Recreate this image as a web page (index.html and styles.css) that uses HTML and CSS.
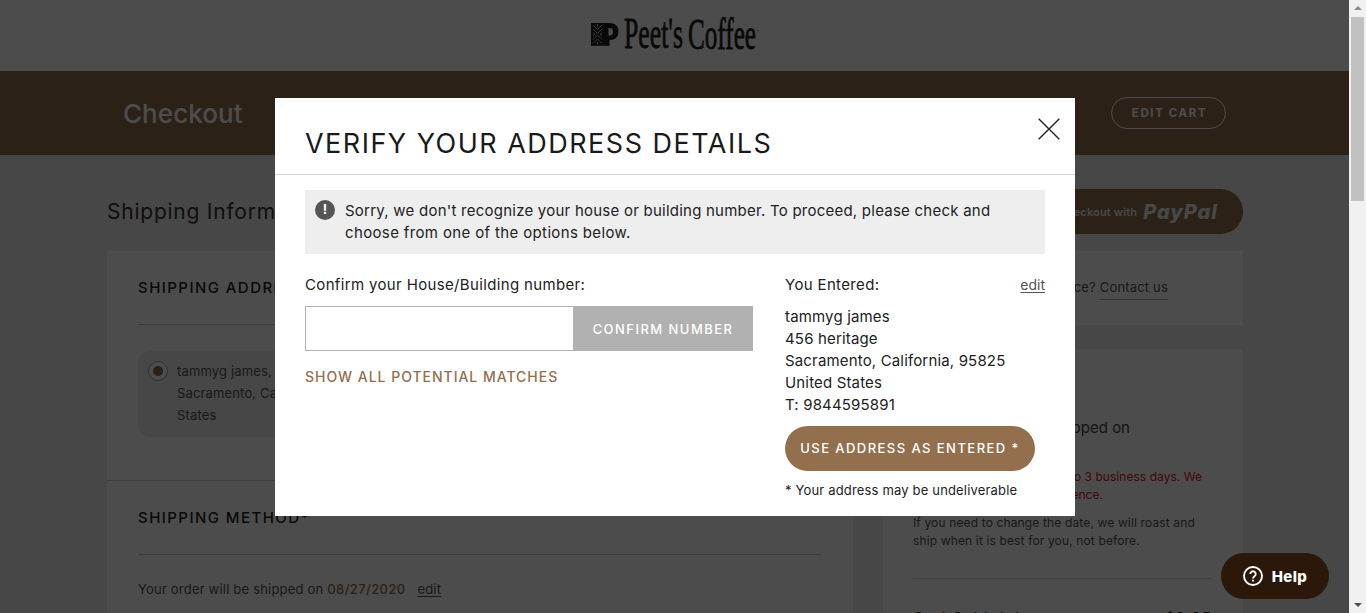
FILE: index.html
```html
<!DOCTYPE html>
<html lang="en">
<head>
<meta charset="utf-8">
<title>Checkout | Peet's Coffee</title>
<link rel="stylesheet" href="styles.css">
</head>
<body>
<div class="window">
  <div class="page">
    <header class="site-header">
      <svg class="logo" width="174" height="50" viewBox="0 0 174 50" role="img" aria-label="Peet's Coffee">
        <path fill-rule="evenodd" d="M3 13h18.500c6 0 9 3.500 9 8.500s-3 8.500-9 8.500v5.700H3zM20.500 18v7.500h1.500c2 0 3-1.500 3-3.700s-1-3.800-3-3.800z"/>
        <g class="logo-weave">
          <path d="M5 15l4.500 4.500L14 15M5 19l4.500 4.500L14 19M9.500 16.500V14"/>
          <path d="M5 29.500L9.500 25l4.500 4.500M5 33.500L9.500 29l4.500 4.500M9.500 34.500V32M5 23l2 1.300-2 1.300M14 23l-2 1.300 2 1.300"/>
        </g>
        <text class="logo-word" x="36" y="38" font-size="45" textLength="59" lengthAdjust="spacingAndGlyphs">Peet's</text>
        <text class="logo-word" x="100" y="39" font-size="44" textLength="68" lengthAdjust="spacingAndGlyphs">Coffee</text>
        <text x="168" y="21" font-size="2">TM</text>
      </svg>
    </header>
    <div class="banner">
      <h1 class="banner-title">Checkout</h1>
      <button class="edit-cart">EDIT CART</button>
    </div>
    <main class="content">
      <section class="col-main">
        <h2 class="col-title">Shipping Information</h2>
        <div class="card">
          <div class="card-section card-address">
            <h3 class="section-title">SHIPPING ADDRESS</h3>
            <div class="address-option">
              <span class="radio"></span>
              <p class="option-text">tammyg james, 456 heritage,<br>Sacramento, California, 95825, United<br>States</p>
            </div>
          </div>
          <div class="card-section card-method">
            <h3 class="section-title">SHIPPING METHOD*</h3>
            <p class="ship-date">Your order will be shipped on <b>08/27/2020</b> <a class="text-link">edit</a></p>
          </div>
        </div>
      </section>
      <aside class="col-side">
        <button class="paypal"><span>Checkout with</span><i>PayPal</i></button>
        <div class="card assist"><span>Need Assistance?</span><a class="contact">Contact us</a></div>
        <div class="card summary">
          <p class="ship-note">Your order will be shipped on</p>
          <div class="delay"><p>Orders may take up to 3 business days. We</p><p class="delay-end">appreciate your patience.</p></div>
          <p class="hint">If you need to change the date, we will roast and<br>ship when it is best for you, not before.</p>
          <div class="subtotal"><span>Cart Subtotal</span><span>$9.95</span></div>
        </div>
      </aside>
    </main>
    <div class="overlay">
      <div class="modal">
        <div class="modal-head">
          <h2 class="modal-title">VERIFY YOUR ADDRESS DETAILS</h2>
          <svg class="close" width="22" height="22" viewBox="0 0 22 22"><path d="M.7.700l20.600 20.600M21.300.700L.7 21.300"/></svg>
        </div>
        <div class="modal-body">
          <div class="alert">
            <span class="alert-icon">!</span>
            <p class="alert-text"><span class="alert-first">Sorry, we don't recognize your house or building number. To proceed, please check and</span><br>choose from one of the options below.</p>
          </div>
          <div class="choices">
            <div class="confirm">
              <label class="label" for="house">Confirm your House/Building number:</label>
              <div class="confirm-row">
                <input id="house" class="house-input" type="text">
                <button class="confirm-btn">CONFIRM NUMBER</button>
              </div>
              <a class="show-all">SHOW ALL POTENTIAL MATCHES</a>
            </div>
            <div class="entered">
              <div class="entered-head"><span class="label">You Entered:</span><a class="text-link">edit</a></div>
              <address class="entered-address">tammyg james<br>456 heritage<br>Sacramento, California, 95825<br>United States<br>T: 9844595891</address>
              <button class="use-btn">USE ADDRESS AS ENTERED *</button>
              <p class="footnote">* Your address may be undeliverable</p>
            </div>
          </div>
        </div>
      </div>
    </div>
    <button class="help">
      <svg width="20" height="20" viewBox="0 0 20 20"><circle cx="10" cy="10" r="9"/><path d="M7.300 8.100a2.700 2.700 0 1 1 4.200 2.200c-1 .7-1.500 1.100-1.500 2.200M10 13.700v1.800"/></svg>
      <span>Help</span>
    </button>
  </div>
  <div class="scrollbar">
    <span class="arrow arrow-up"></span>
    <span class="thumb"></span>
    <span class="arrow arrow-down"></span>
  </div>
</div>
</body>
</html>
```

FILE: styles.css
```css
* { box-sizing: border-box; }
body, h1, h2, h3, p { margin: 0; }
body { font-family: Inter, "Open Sans", sans-serif; color: #222; overflow: hidden; }
button { font-family: inherit; border: 0; padding: 0; white-space: nowrap; }

.window { display: flex; height: 613px; }
.page { position: relative; flex: 1; height: 613px; overflow: hidden; background: #ededed; }

/* Header and banner */
.site-header { height: 71px; background: #fff; display: flex; justify-content: center; padding-top: 10px; }
.logo { margin-left: 1px; overflow: visible; fill: #231f20; font-family: "Liberation Serif", serif; }
.logo-word { stroke: #231f20; stroke-width: .8; }
.logo-weave { fill: none; stroke: #bbb; stroke-width: 1; }
.banner { height: 84px; background: #936f4e; display: flex; align-items: center; justify-content: space-between; padding: 0 123px 0 123px; color: #fff; }
.banner-title { font-size: 26px; font-weight: 500; letter-spacing: .05px; }
.edit-cart { width: 115px; height: 32px; padding-left: 2px; border: 1px solid #fff; border-radius: 16px; background: none; color: #fff; font-size: 11.500px; font-weight: 700; letter-spacing: 1.600px; }

/* Columns */
.content { display: flex; gap: 30px; width: 1136px; margin: 0 0 0 107px; padding-top: 34px; }
.col-main { width: 746px; }
.col-side { width: 360px; }
.col-title { height: 62px; padding-top: 10px; font-size: 21px; line-height: 26px; font-weight: 400; letter-spacing: .76px; color: #333; }
.card { background: #fff; }
.card-section { padding: 0 32px 0 31px; }
.card-address { height: 230px; border-bottom: 1px solid #ccc; }
.section-title { height: 74px; line-height: 74px; border-bottom: 1px solid #ccc; font-size: 15px; font-weight: 500; letter-spacing: 1.440px; }
.address-option { display: flex; gap: 9px; width: 400px; height: 86px; margin-top: 26px; padding: 9px 10px; border-radius: 12px; background: #ededed; }
.radio { width: 20px; height: 20px; margin-top: 1px; border: 1px solid #999; border-radius: 50%; background: radial-gradient(circle, #936f4e 4.500px, #fff 5.500px); }
.option-text { font-size: 13px; line-height: 22px; letter-spacing: .15px; color: #555; }
.card-method { height: 140px; }
.ship-date { padding-top: 23px; font-size: 13px; line-height: 22px; letter-spacing: .2px; color: #555; white-space: pre; }
.ship-date b { font-weight: 500; letter-spacing: .38px; color: #936f4e; }
.ship-date .text-link { margin-left: 8px; font-size: 13px; }
.text-link { text-decoration: underline; text-underline-offset: 2px; font-size: 14px; color: #555; }

.paypal { width: 360px; height: 45px; margin-bottom: 17px; padding-right: 25px; border-radius: 23px; background: #936f4e; color: #ededed; display: flex; align-items: center; justify-content: flex-end; gap: 6px; }
.paypal span { font-size: 11px; font-weight: 600; letter-spacing: .15px; }
.paypal i { font-size: 20px; font-weight: 800; letter-spacing: 1px; }
.assist { height: 74px; padding: 0 75px 2px 0; display: flex; justify-content: flex-end; align-items: center; gap: 4px; font-size: 13px; letter-spacing: .17px; color: #555; }
.contact { border-bottom: 1px solid #bbb; padding: 4px 0; }
.summary { height: 300px; margin-top: 24px; padding: 68px 31px 0 30px; }
.ship-note { width: 217px; font-size: 15px; line-height: 22px; white-space: nowrap; display: flex; justify-content: flex-end; color: #444; }
.delay { width: 289px; margin-top: 29px; font-size: 12px; line-height: 18px; letter-spacing: .04px; color: #e02020; white-space: nowrap; text-align: right; }
.delay-end { width: 190px; }
.hint { margin-top: 10px; font-size: 12px; line-height: 18px; letter-spacing: .14px; color: #555; white-space: nowrap; }
.subtotal { display: flex; justify-content: space-between; margin-top: 28px; padding-top: 28px; border-top: 1px solid #ddd; font-size: 15px; line-height: 22px; font-weight: 500; letter-spacing: 1px; }

/* Dialog */
.overlay { position: absolute; inset: 0; background: rgba(0, 0, 0, .7); padding-top: 98px; }
.modal { width: 800px; height: 418px; margin: 0 0 0 275px; background: #fff; color: #222; }
.modal-head { display: flex; justify-content: space-between; height: 77px; padding: 20px 15px 0 30px; border-bottom: 1px solid #d5d5d5; }
.modal-title { padding-top: 1px; font-size: 27px; line-height: 50px; font-weight: 400; letter-spacing: 1.480px; color: #1a1a1a; }
.close { fill: none; stroke: #222; stroke-width: 1.400; }
.modal-body { padding: 15px 30px 0; }
.alert { display: flex; gap: 10px; height: 64px; padding: 10px; background: #eee; }
.alert-icon { width: 20px; height: 20px; border-radius: 50%; background: #555; color: #fff; font-size: 13px; font-weight: 700; line-height: 19px; text-align: center; }
.alert-text { font-size: 15px; line-height: 22px; letter-spacing: .36px; white-space: nowrap; }
.alert-first { letter-spacing: .235px; }
.choices { display: flex; gap: 32px; padding-top: 20px; }
.confirm { width: 448px; }
.label { display: block; font-size: 15px; line-height: 22px; letter-spacing: .35px; }
.confirm-row { display: flex; height: 45px; margin: 10px 0 15px; }
.house-input { width: 268px; border: 1px solid #b1b1b1; border-right: 0; background: #fff; }
.confirm-btn { flex: 1; background: #b1b1b1; color: #fff; font-size: 13px; font-weight: 500; letter-spacing: 1.450px; }
.show-all { font-size: 14px; line-height: 22px; font-weight: 500; letter-spacing: .980px; color: #936f4e; }
.entered { width: 260px; }
.entered-head { display: flex; justify-content: space-between; align-items: center; height: 22px; }
.entered-head .text-link { padding-bottom: 2px; }
.entered-address { margin: 10px 0; font-style: normal; font-size: 15px; line-height: 22px; letter-spacing: .16px; }
.use-btn { display: block; width: 250px; height: 45px; padding-bottom: 1px; border-radius: 23px; background: #936f4e; color: #fff; font-size: 13px; font-weight: 500; letter-spacing: 1.450px; }
.footnote { margin-top: 8px; font-size: 13px; line-height: 22px; letter-spacing: .17px; }

/* Floating help button */
.help { position: absolute; right: 20px; bottom: 14px; width: 108px; height: 46px; border-radius: 23px; background: #2b180a; color: #fff; display: flex; align-items: center; justify-content: center; gap: 9px; font-size: 15px; font-weight: 800; letter-spacing: .4px; }
.help svg { fill: none; stroke: #fff; stroke-width: 1.900; }

/* Scrollbar */
.scrollbar { width: 17px; height: 613px; padding: 6px 2px 6px; background: #f1f1f1; display: flex; flex-direction: column; align-items: center; }
.arrow { border: 4px solid transparent; }
.arrow-up { border-top-width: 0; border-bottom-color: #8b8b8b; }
.thumb { width: 13px; height: 184px; margin: 7px 0 auto; background: #c1c1c1; }
.arrow-down { border-bottom-width: 0; border-top-color: #505050; }
```
